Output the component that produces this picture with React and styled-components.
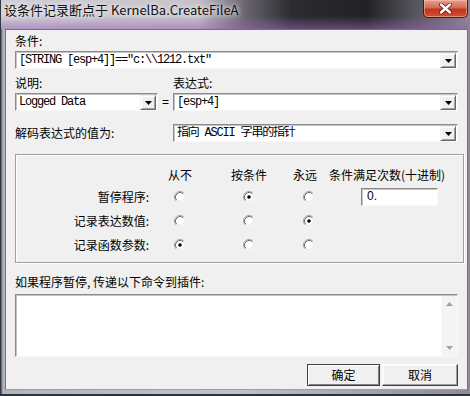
import React from 'react'
import styled, { createGlobalStyle } from 'styled-components'

const GlobalStyle = createGlobalStyle`
	body {
		margin: 0;
		font-family: "Noto Sans CJK SC", "Liberation Sans", sans-serif;
		font-size: 12px;
		color: #000;
	}
`;

const MONO = `"Liberation Mono", "Noto Sans CJK SC", monospace`;

// classic 3d radio button
const Radio = ({ checked }) => (
	<svg width="12" height="12" viewBox="0 0 12 12">
		<circle cx="6" cy="6" r="5.5" fill="#fff" />
		<path d="M2.11 9.89 A5.5 5.5 0 0 1 9.89 2.11" fill="none" stroke="#a0a0a0" />
		<path d="M2.82 9.18 A4.5 4.5 0 0 1 9.18 2.82" fill="none" stroke="#696969" />
		<path d="M9.18 2.82 A4.5 4.5 0 0 1 2.82 9.18" fill="none" stroke="#e3e3e3" />
		{checked && <circle cx="6" cy="6" r="1.8" fill="#000" />}
	</svg>
);

const DownArrow = ({ color = '#000' }) => (
	<svg width="7" height="4" viewBox="0 0 7 4">
		<path d="M0 0 H7 L3.5 4 Z" fill={color} />
	</svg>
);

const UpArrow = ({ color = '#000' }) => (
	<svg width="7" height="4" viewBox="0 0 7 4">
		<path d="M0 4 H7 L3.5 0 Z" fill={color} />
	</svg>
);

const Combo = ({ children, mono }) => (
	<ComboBox>
		<ComboField $mono={mono}>{children}</ComboField>
		<DropButton><DownArrow /></DropButton>
	</ComboBox>
);

const rows = [
	{ label: '暂停程序:', value: 1, count: true },
	{ label: '记录表达数值:', value: 2 },
	{ label: '记录函数参数:', value: 0 },
];

const App = () => {
	return (
		<>
			<GlobalStyle />
			<Window>
				<TitleBar>
					<TitleText>设条件记录断点于 KernelBa.CreateFileA</TitleText>
					<CloseButton>
						<svg width="13" height="11" viewBox="0 0 13 11">
							<path d="M2 1.5 L11 9.5 M11 1.5 L2 9.5" stroke="#5a1810" strokeWidth="4" strokeLinecap="round" />
							<path d="M2 1.5 L11 9.5 M11 1.5 L2 9.5" stroke="#fff" strokeWidth="2.4" strokeLinecap="round" />
						</svg>
					</CloseButton>
				</TitleBar>
				<Client>
					<Label>条件:</Label>
					<Spaced $top={3}>
						<Combo mono>[STRING [esp+4]]=="c:\\1212.txt"</Combo>
					</Spaced>

					<ExprGrid $top={7}>
						<Label>说明:</Label>
						<span />
						<Label>表达式:</Label>
						<Combo mono>Logged Data</Combo>
						<Equals>=</Equals>
						<Combo mono>[esp+4]</Combo>
					</ExprGrid>

					<ExprGrid $top={13}>
						<WideLabel>解码表达式的值为:</WideLabel>
						<Combo mono>指向 ASCII 字串的指针</Combo>
					</ExprGrid>

					<GroupBox>
						<GroupGrid>
							<span />
							<ColHead>从不</ColHead>
							<ColHead>按条件</ColHead>
							<ColHead $shift={8}>永远</ColHead>
							<CountHead>条件满足次数(十进制)</CountHead>
							{rows.map((row) => (
								<React.Fragment key={row.label}>
									<RowLabel>{row.label}</RowLabel>
									{[0, 1, 2].map((i) => (
										<RadioCell key={i}><Radio checked={row.value === i} /></RadioCell>
									))}
									<div>{row.count && <CountEdit>0.</CountEdit>}</div>
								</React.Fragment>
							))}
						</GroupGrid>
					</GroupBox>

					<Spaced $top={12}>
						<Label>如果程序暂停, 传递以下命令到插件:</Label>
					</Spaced>
					<Memo>
						<MemoText />
						<ScrollBar>
							<UpArrow color="#a0a0a0" />
							<DownArrow color="#a0a0a0" />
						</ScrollBar>
					</Memo>

					<ButtonRow>
						<Button $default $width={73}>确定</Button>
						<Button $width={76}>取消</Button>
					</ButtonRow>
				</Client>
			</Window>
		</>
	);
};

const Window = styled.div`
	width: 470px;
	height: 396px;
	display: flex;
	flex-direction: column;
	box-sizing: border-box;
	background: linear-gradient(to right, #4d5866 0px, #b6b2bb 2px, #c4c0c8 50%, #8f8a96 100%);
	border-left: 1px solid #2e3844;
	border-bottom: 2px solid #2a323c;
	overflow: hidden;
`;

const TitleBar = styled.div`
	height: 29px;
	flex-shrink: 0;
	display: flex;
	justify-content: space-between;
	align-items: flex-start;
	background:
		linear-gradient(to bottom, rgba(0, 0, 0, 0) 55%, rgba(150, 100, 180, 0.55) 100%),
		linear-gradient(to right, #d0cdd4 0%, #c6c2ca 42%, #6a6670 52%, #2c2b30 62%, #222226 78%, #55535a 88%, #8d8994 100%);
`;

const TitleText = styled.div`
	padding-left: 3px;
	line-height: 20px;
	font-size: 13px;
	white-space: nowrap;
	color: #111;
	text-shadow: 0 0 4px rgba(255, 255, 255, 0.9), 0 0 8px rgba(255, 255, 255, 0.6);
`;

const CloseButton = styled.div`
	width: 45px;
	height: 18px;
	margin-right: 2px;
	box-sizing: border-box;
	display: flex;
	align-items: center;
	justify-content: center;
	border: 1px solid #4a1a14;
	border-top: none;
	border-radius: 0 0 5px 5px;
	background: linear-gradient(to bottom, #e8a090 0%, #d46a54 45%, #c0341c 55%, #d0503a 100%);
	box-shadow: inset 0 0 0 1px rgba(255, 200, 190, 0.5);
`;

const Client = styled.div`
	flex: 1;
	margin: 0 2px 4px 4px;
	padding: 4px 9px 0 9px;
	background: #f0f0f0;
	display: flex;
	flex-direction: column;
	border: 1px solid #6a7480;
	border-bottom-color: #9aa0a8;
`;

const Label = styled.div`
	line-height: 14px;
	white-space: nowrap;
`;

const WideLabel = styled(Label)`
	grid-column: 1 / span 2;
`;

const Spaced = styled.div`
	margin-top: ${(p) => p.$top}px;
`;

const ComboBox = styled.div`
	height: 18px;
	box-sizing: border-box;
	display: flex;
	background: #fff;
	border: 1px solid;
	border-color: #8a8a8a #f8f8f8 #f8f8f8 #8a8a8a;
	box-shadow: inset 1px 1px #c4c4c4;
	padding: 1px 1px 0 1px;
`;

const ComboField = styled.div`
	flex: 1;
	padding-left: 2px;
	line-height: 15px;
	font-family: ${(p) => (p.$mono ? MONO : 'inherit')};
	font-size: 12px;
	letter-spacing: ${(p) => (p.$mono ? '-1.2px' : 'normal')};
	white-space: nowrap;
	overflow: hidden;
`;

const DropButton = styled.div`
	width: 16px;
	height: 15px;
	box-sizing: border-box;
	display: flex;
	align-items: center;
	justify-content: center;
	background: #f0f0f0;
	border: 1px solid;
	border-color: #f0f0f0 #696969 #696969 #f0f0f0;
	box-shadow: inset 1px 1px #fff, inset -1px -1px #a0a0a0;
`;

const ExprGrid = styled.div`
	margin-top: ${(p) => p.$top}px;
	display: grid;
	grid-template-columns: 143px 15px 1fr;
	row-gap: 3px;
	align-items: center;
`;

const Equals = styled.div`
	text-align: center;
	line-height: 14px;
	font-family: "Liberation Sans", sans-serif;
`;

const GroupBox = styled.div`
	margin-top: 12px;
	margin-right: -6px;
	height: 109px;
	box-sizing: border-box;
	padding-top: 13px;
	border: 1px solid #a0a0a0;
	box-shadow: inset 1px 1px #fff, 1px 1px #fff;
`;

const GroupGrid = styled.div`
	display: grid;
	grid-template-columns: 136px 56px 82px 38px 1fr;
	grid-template-rows: 14px 18px 18px 18px;
	row-gap: 6px;
	align-items: center;
`;

const ColHead = styled.div`
	text-align: center;
	line-height: 14px;
	padding-right: ${(p) => p.$shift || 0}px;
`;

const CountHead = styled.div`
	padding-left: 1px;
	line-height: 14px;
	white-space: nowrap;
`;

const RowLabel = styled.div`
	text-align: right;
	padding-right: 3px;
	line-height: 14px;
	white-space: nowrap;
`;

const RadioCell = styled.div`
	display: flex;
	justify-content: center;
	align-items: center;
`;

const CountEdit = styled.div`
	margin-left: 33px;
	width: 77px;
	height: 18px;
	box-sizing: border-box;
	padding-left: 5px;
	line-height: 15px;
	background: #fff;
	border: 1px solid;
	border-color: #8a8a8a #f8f8f8 #f8f8f8 #8a8a8a;
	box-shadow: inset 1px 1px #c4c4c4;
	font-family: "Liberation Sans", sans-serif;
`;

const Memo = styled.div`
	margin-top: 5px;
	height: 63px;
	box-sizing: border-box;
	display: flex;
	background: #fff;
	border: 1px solid;
	border-color: #8a8a8a #f8f8f8 #f8f8f8 #8a8a8a;
	box-shadow: inset 1px 1px #c4c4c4;
	padding: 1px 0 0 1px;
`;

const MemoText = styled.div`
	flex: 1;
`;

const ScrollBar = styled.div`
	width: 16px;
	display: flex;
	flex-direction: column;
	justify-content: space-between;
	align-items: center;
	padding: 6px 0 6px;
	background: #f4f4f4;
`;

const ButtonRow = styled.div`
	margin-top: 7px;
	display: flex;
	justify-content: flex-end;
	gap: 2px;
`;

const Button = styled.div`
	width: ${(p) => p.$width}px;
	height: 22px;
	box-sizing: border-box;
	display: flex;
	align-items: center;
	justify-content: center;
	background: #f0f0f0;
	border: 1px solid;
	border-color: ${(p) => (p.$default ? '#404040' : '#fff #404040 #404040 #fff')};
	box-shadow: ${(p) => (p.$default
		? 'inset 1px 1px #fff, inset -1px -1px #808080'
		: 'inset -1px -1px #a0a0a0, inset 1px 1px #f8f8f8')};
	line-height: 14px;
`;

export default App;
